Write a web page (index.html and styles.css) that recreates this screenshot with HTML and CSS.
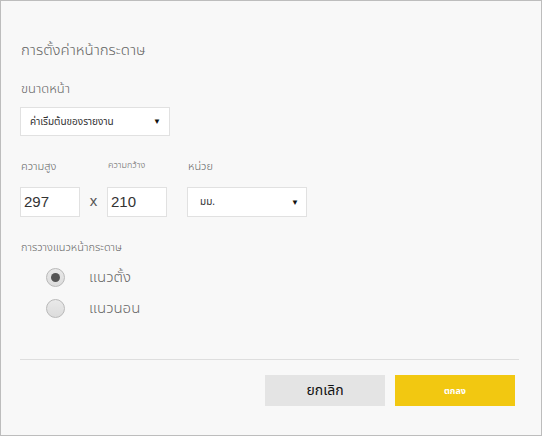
FILE: index.html
```html
<!DOCTYPE html>
<html lang="th">
<head>
<meta charset="utf-8">
<link rel="stylesheet" href="styles.css">
</head>
<body>
<div class="dialog">
  <h1 class="title">การตั้งค่าหน้ากระดาษ</h1>
  <div class="label">ขนาดหน้า</div>
  <div class="select size-select">
    <span class="select-text">ค่าเริ่มต้นของรายงาน</span>
    <span class="arrow">▼</span>
  </div>
  <div class="dims">
    <div class="field">
      <div class="small-label">ความสูง</div>
      <div class="input">297</div>
    </div>
    <div class="times">x</div>
    <div class="field">
      <div class="small-label tiny">ความกว้าง</div>
      <div class="input">210</div>
    </div>
    <div class="field unit">
      <div class="small-label">หน่วย</div>
      <div class="select unit-select">
        <span class="select-text unit-text">มม.</span>
        <span class="arrow">▼</span>
      </div>
    </div>
  </div>
  <div class="orient-label">การวางแนวหน้ากระดาษ</div>
  <div class="radios">
    <div class="radio-row">
      <span class="radio checked"></span>
      <span class="radio-text">แนวตั้ง</span>
    </div>
    <div class="radio-row">
      <span class="radio"></span>
      <span class="radio-text">แนวนอน</span>
    </div>
  </div>
  <div class="divider"></div>
  <div class="buttons">
    <div class="btn cancel">ยกเลิก</div>
    <div class="btn ok">ตกลง</div>
  </div>
</div>
</body>
</html>
```

FILE: styles.css
```css
* { box-sizing: border-box; }
html, body { margin: 0; padding: 0; }
body {
  width: 542px;
  height: 436px;
  font-family: "Noto Sans Thai", "Leelawadee UI", "Noto Sans", "DejaVu Sans", sans-serif;
  font-weight: 300;
  color: #666;
}
.dialog {
  width: 542px;
  height: 436px;
  background: #f8f8f8;
  border: 1px solid #bdbdbd;
  padding: 0 20px 0 19px;
  display: flex;
  flex-direction: column;
}
.title {
  margin: 38px 0 0 1px;
  font-size: 15px;
  font-weight: 300;
  line-height: 24px;
  color: #666;
}
.label {
  margin: 16px 0 0 1px;
  font-size: 13px;
  line-height: 20px;
}
.select {
  display: flex;
  align-items: center;
  justify-content: space-between;
  background: #fff;
  border: 1px solid #e1e1e1;
  height: 29px;
}
.size-select {
  margin-top: 8px;
  width: 150px;
  padding: 0 8px 0 9px;
}
.select-text {
  font-size: 10px;
  color: #333;
  font-weight: 400;
}
.arrow {
  font-size: 8px;
  color: #111;
  font-family: "DejaVu Sans", sans-serif;
}
.dims {
  display: flex;
  align-items: flex-end;
  margin-top: 23px;
}
.field { display: flex; flex-direction: column; }
.small-label {
  font-size: 11px;
  line-height: 16px;
  height: 16px;
  margin: 0 0 12px 1px;
  color: #666;
}
.small-label.tiny {
  font-size: 9px;
  line-height: 10px;
  height: 10px;
  margin-bottom: 17px;
}
.input {
  width: 60px;
  height: 30px;
  background: #fff;
  border: 1px solid #e1e1e1;
  font-family: "Liberation Sans", Arial, sans-serif;
  font-weight: 400;
  font-size: 15px;
  line-height: 28px;
  padding-left: 3px;
  color: #333;
}
.times {
  width: 27px;
  height: 30px;
  line-height: 28px;
  text-align: center;
  font-family: "Liberation Sans", Arial, sans-serif;
  font-weight: 400;
  font-size: 15px;
  color: #555;
}
.unit { margin-left: 20px; }
.unit-select {
  width: 120px;
  height: 30px;
  padding: 0 7px 0 12px;
}
.unit-text { font-size: 10px; }
.orient-label {
  margin: 23px 0 0 1px;
  font-size: 11px;
  line-height: 16px;
}
.radios {
  margin-top: 12px;
  display: flex;
  flex-direction: column;
  gap: 12px;
  padding-left: 26px;
}
.radio-row {
  display: flex;
  align-items: center;
  height: 19px;
}
.radio {
  width: 19px;
  height: 19px;
  border-radius: 50%;
  border: 1px solid #b9b9b9;
  background: linear-gradient(#e9e9e9, #dcdcdc);
  display: flex;
  align-items: center;
  justify-content: center;
}
.radio.checked::after {
  content: "";
  width: 9px;
  height: 9px;
  border-radius: 50%;
  background: #555;
}
.radio-text {
  margin-left: 24px;
  font-size: 15px;
  color: #666;
}
.divider {
  margin-top: 41px;
  height: 1px;
  background: #dedede;
  width: 499px;
}
.buttons {
  display: flex;
  justify-content: flex-end;
  gap: 10px;
  margin-top: 15px;
  padding-right: 6px;
}
.btn {
  width: 120px;
  height: 31px;
  display: flex;
  align-items: center;
  justify-content: center;
}
.cancel {
  background: #e4e4e4;
  color: #111;
  font-size: 14px;
  font-weight: 400;
}
.ok {
  background: #f2c811;
  color: #fff;
  font-size: 9px;
  font-weight: 700;
}
```
